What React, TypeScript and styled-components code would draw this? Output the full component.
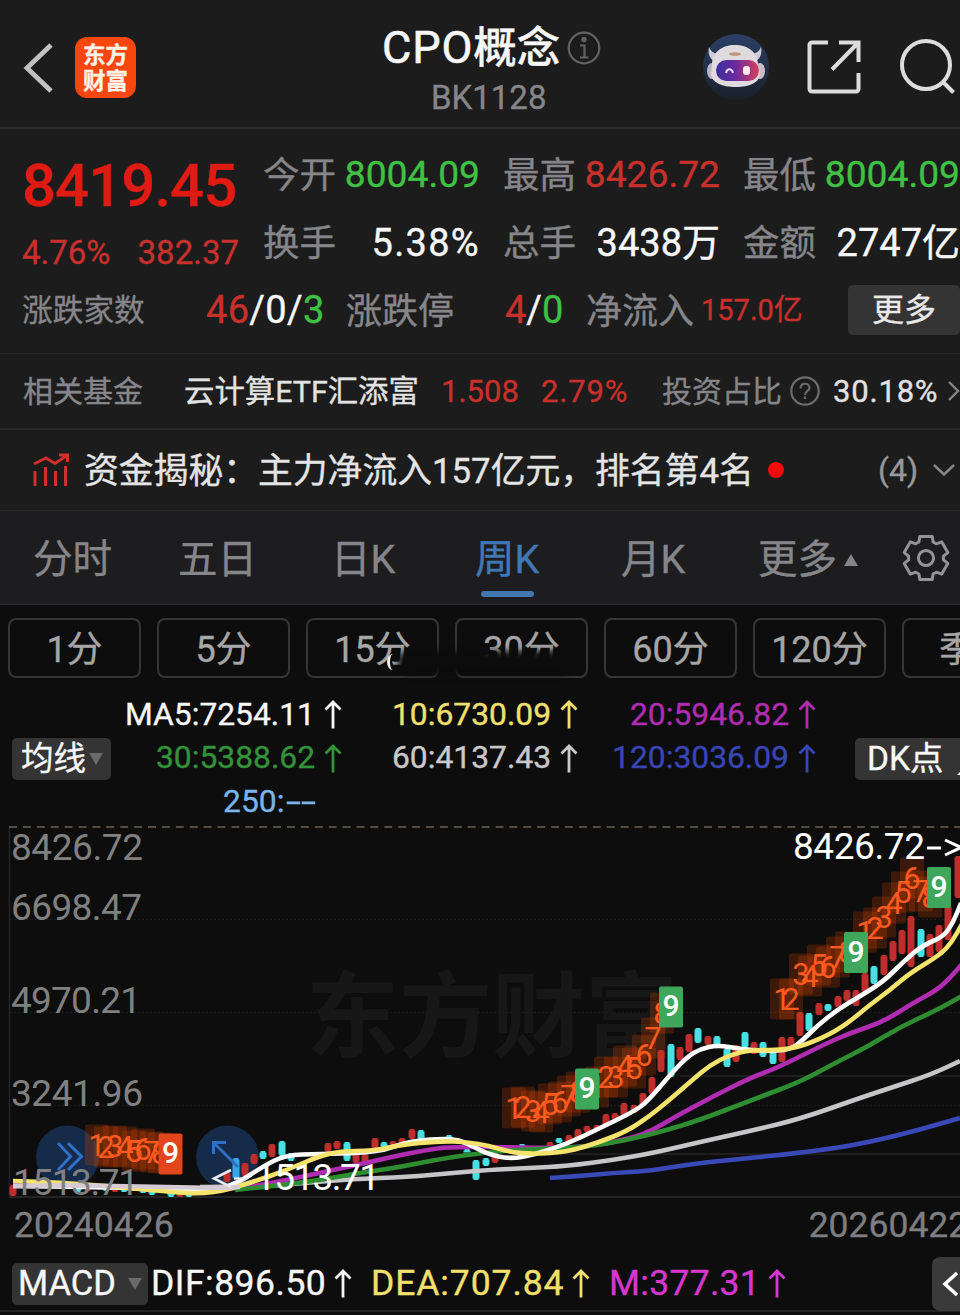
import styled, { createGlobalStyle } from "styled-components";

const RED = "#c8302c";
const GREEN = "#3fc144";
const GREY = "#86868a";
const WHITE = "#f7f7f7";
const YELLOW = "#f2e06e";
const PURPLE = "#b02cb0";
const FONT = `Roboto, "Noto Sans CJK SC", sans-serif`;

const periods = ["1分", "5分", "15分", "30分", "60分", "120分", "季K"];

const averages = [
  { text: "MA5:7254.11", color: WHITE },
  { text: "10:6730.09", color: YELLOW },
  { text: "20:5946.82", color: PURPLE },
  { text: "30:5388.62", color: "#34923a" },
  { text: "60:4137.43", color: "#c9c9c9" },
  { text: "120:3036.09", color: "#3746b4" },
];

// x, top, bottom, u = up (red) / d = down (cyan)
const candles: [number, number, number, string][] = [
  [13, 1185, 1196, "u"], [78, 1186, 1192, "d"], [88, 1184, 1191, "u"], [106, 1185, 1191, "d"],
  [115, 1186, 1192, "u"], [124, 1186, 1192, "d"], [143, 1187, 1193, "d"], [152, 1188, 1195, "d"],
  [171, 1190, 1197, "d"], [180, 1190, 1197, "u"], [189, 1190, 1197, "d"], [227, 1172, 1182, "u"],
  [236, 1158, 1179, "b"], [245, 1163, 1176, "u"], [254, 1154, 1164, "u"], [263, 1151, 1159, "d"],
  [272, 1144, 1157, "u"], [282, 1141, 1156, "d"], [291, 1153, 1161, "d"], [328, 1143, 1152, "u"],
  [337, 1141, 1149, "u"], [347, 1142, 1161, "d"], [356, 1153, 1163, "u"], [365, 1154, 1163, "u"],
  [375, 1138, 1149, "u"], [384, 1142, 1148, "d"], [393, 1141, 1146, "u"], [402, 1138, 1144, "u"],
  [412, 1129, 1139, "u"], [421, 1130, 1140, "d"], [449, 1135, 1140, "d"], [467, 1149, 1152, "d"],
  [476, 1160, 1180, "d"], [486, 1158, 1166, "d"], [495, 1156, 1163, "u"], [522, 1144, 1148, "d"],
  [550, 1142, 1146, "u"], [559, 1138, 1143, "d"], [569, 1135, 1144, "u"], [578, 1129, 1140, "u"],
  [587, 1126, 1132, "u"], [597, 1125, 1131, "u"], [606, 1114, 1126, "u"], [615, 1113, 1120, "u"],
  [624, 1103, 1116, "u"], [634, 1105, 1113, "u"], [643, 1093, 1106, "u"], [652, 1077, 1094, "u"],
  [661, 1050, 1072, "u"], [671, 1044, 1077, "d"], [680, 1047, 1060, "u"], [689, 1034, 1052, "u"],
  [698, 1028, 1043, "d"], [708, 1036, 1045, "u"], [717, 1036, 1048, "d"], [727, 1048, 1067, "d"],
  [736, 1045, 1062, "u"], [745, 1032, 1048, "d"], [754, 1042, 1054, "u"], [763, 1042, 1057, "d"],
  [773, 1050, 1064, "d"], [782, 1037, 1062, "u"], [791, 1037, 1047, "u"], [800, 1012, 1036, "u"],
  [809, 1013, 1031, "d"], [819, 1003, 1015, "u"], [828, 1004, 1011, "d"], [838, 996, 1007, "u"],
  [847, 990, 1001, "u"], [856, 990, 1006, "u"], [865, 973, 993, "u"], [874, 966, 984, "d"],
  [884, 955, 975, "u"], [893, 941, 961, "u"], [902, 930, 954, "u"], [911, 916, 967, "u"],
  [921, 929, 957, "d"], [930, 934, 957, "u"], [939, 925, 952, "u"], [948, 905, 940, "u"],
  [958, 856, 898, "u"],
];

const candleColors: Record<string, string> = { u: "#bd2e2d", d: "#48e0e2", b: "#35a8e8" };

const lines = [
  {
    color: "#3a49b8",
    points: "550,1178 580,1176 613,1173 647,1171 673,1167 700,1163 740,1159 780,1155 830,1149 870,1142 915,1131 960,1118",
  },
  {
    color: "#c6c6c8",
    points: "200,1187 260,1187 303,1183 353,1179 407,1177 453,1173 487,1170 530,1168 567,1166 613,1160 653,1153 700,1142 750,1131 800,1119 857,1099 890,1088 930,1075 960,1061",
  },
  {
    color: PURPLE,
    points: "13,1184 120,1188 210,1190 245,1188 287,1180 333,1170 370,1162 400,1155 433,1149 450,1147 500,1147 543,1148 587,1147 633,1138 653,1130 673,1118 710,1098 750,1078 777,1068 823,1045 850,1033 883,1022 913,1003 937,990 950,978 962,964",
  },
  {
    color: "#2f8d31",
    points: "235,1190 303,1183 353,1174 400,1167 440,1159 487,1152 533,1149 587,1147 627,1140 660,1132 700,1120 757,1098 800,1082 837,1062 867,1047 900,1027 937,1010 962,996",
  },
  {
    color: "#fbfbfb",
    points: "13,1186 110,1187 170,1190 210,1192 238,1183 262,1167 285,1155 320,1154 360,1153 385,1150 410,1141 450,1138 467,1143 487,1154 510,1159 533,1155 567,1144 600,1128 633,1112 647,1102 670,1075 687,1057 700,1049 718,1045 740,1049 765,1051 790,1050 803,1040 817,1026 837,1010 857,998 883,982 903,962 923,945 943,937 953,923 961,903",
  },
  {
    color: "#f4e36c",
    points: "13,1181 60,1182 150,1190 208,1195 253,1182 287,1170 317,1157 340,1151 373,1151 400,1145 440,1141 467,1142 490,1146 510,1152 533,1154 567,1152 600,1142 627,1131 647,1118 667,1102 690,1082 710,1065 730,1055 750,1050 790,1050 823,1038 847,1024 867,1007 890,990 910,973 940,955 952,942 962,924",
  },
  {
    color: "#d6cbd4",
    points: "13,1186 60,1185 110,1186 170,1187 215,1188 240,1187",
  },
];

// centre points of the 1-8 counts, the closing 9 comes last
const counts = [
  { fill: "#e2441b", at: [[97, 1145], [106, 1147], [115, 1146], [125, 1147], [134, 1151], [143, 1149], [152, 1152], [160, 1153], [170.5, 1154]] },
  { fill: "#3fa75b", at: [[514, 1108], [523, 1107], [533, 1111], [541, 1112], [550, 1104], [560, 1102], [569, 1096], [578, 1092], [587, 1089]] },
  { fill: "#3fa75b", at: [[597, 1087], [606, 1077], [616, 1077], [625, 1066], [634, 1068], [644, 1055], [653, 1038], [662, 1013], [671, 1007]] },
  { fill: "#3fa75b", at: [[782, 999], [791, 999], [801, 974], [810, 976], [819, 965], [828, 967], [838, 957], [847, 952], [856, 952.5]] },
  { fill: "#3fa75b", at: [[865, 932], [875, 928], [884, 917], [894, 903], [903, 892], [912, 878], [921, 891], [930, 897], [939, 887.5]] },
];

function smooth(points: string) {
  const p = points.split(" ").map((s) => s.split(",").map(Number));
  let d = `M${p[0][0]} ${p[0][1]}`;
  for (let i = 1; i < p.length - 1; i++) {
    const mx = (p[i][0] + p[i + 1][0]) / 2;
    const my = (p[i][1] + p[i + 1][1]) / 2;
    d += `Q${p[i][0]} ${p[i][1]} ${mx} ${my}`;
  }
  const last = p[p.length - 1];
  return d + `L${last[0]} ${last[1]}`;
}

function gearPath() {
  const out: string[] = [];
  for (let k = 0; k < 6; k++) {
    [[-24, 17.5], [-16, 22.5], [16, 22.5], [24, 17.5]].forEach(([deg, r]) => {
      const a = ((k * 60 + deg - 90) * Math.PI) / 180;
      out.push(`${(24 + r * Math.cos(a)).toFixed(1)} ${(24 + r * Math.sin(a)).toFixed(1)}`);
    });
  }
  return `M${out.join("L")}Z`;
}

const UpArrow = () => (
  <svg width="18" height="29" viewBox="0 0 18 29" fill="none" stroke="currentColor" strokeWidth="2.8">
    <path d="M9 28.5V2M1.5 9.5L9 2L16.5 9.5" />
  </svg>
);

const Robot = () => (
  <svg width="68" height="68" viewBox="0 0 68 68">
    <defs>
      <linearGradient id="sky" x1="0" y1="0" x2="0" y2="1">
        <stop offset="0" stopColor="#2b4067" />
        <stop offset="1" stopColor="#1b2029" />
      </linearGradient>
      <linearGradient id="visor" x1="0" y1="0" x2="1" y2="0">
        <stop offset="0" stopColor="#3a2f9c" />
        <stop offset="0.45" stopColor="#6a2aa0" />
        <stop offset="1" stopColor="#d8405c" />
      </linearGradient>
    </defs>
    <circle cx="34" cy="34" r="33" fill="url(#sky)" />
    <path d="M7 14c-1 6 0 11 5 14l8-7c-6 1-11-2-13-7zM59 14c1 6 0 11-5 14l-8-7c6 1 11-2 13-7z" fill="#cfcad4" />
    <ellipse cx="10" cy="38" rx="5" ry="8" fill="#bcb7c6" />
    <ellipse cx="58" cy="38" rx="5" ry="8" fill="#c6bfca" />
    <path d="M10 32c0-13 10-20 23-20s23 7 23 20l2 8c0 10-11 14-24 14s-25-4-25-14z" fill="#dedade" />
    <ellipse cx="33" cy="21" rx="6" ry="1.8" fill="#bf947e" />
    <rect x="14" y="27" width="43" height="21" rx="10.5" fill="url(#visor)" />
    <path d="M24 40c1-5 6-5 7 0" fill="none" stroke="#e4dcff" strokeWidth="2" />
    <rect x="41" y="33" width="7" height="9" rx="3" fill="#ffe6ee" />
  </svg>
);

function KLineChart() {
  return (
    <ChartSvg viewBox="0 826 960 372" width="960" height="372">
      <text x="306" y="1050" fontSize="93" fontWeight="700" fill="#171717">东方财富</text>
      <g stroke="#1b1b1b" strokeWidth="1.5">
        <path d="M10 919.5H960M10 1012.5H960M10 1105.5H960" strokeDasharray="2 2" />
        <path d="M680 1076H960M560 1154H960" stroke="#252525" />
        <path d="M9.5 827V1197" stroke="#242424" />
        <path d="M9.5 1197H960" stroke="#2e2e2e" />
      </g>
      <path d="M9 827H960" stroke="#6c6155" strokeWidth="1.6" strokeDasharray="8 5.9" />

      <g fill="#162b49">
        <circle cx="67.5" cy="1157" r="31.5" />
        <circle cx="227.5" cy="1157" r="31.5" />
      </g>

      {candles.map(([x, top, bottom, dir]) => (
        <g key={x} fill={candleColors[dir]}>
          <rect x={x - 2.5} y={top} width="5" height={bottom - top} />
          <rect x={x - 3.5} y={top + 1.5} width="7" height={Math.max(bottom - top - 3, 2)} />
        </g>
      ))}
      {lines.map((line) => (
        <path key={line.color} d={smooth(line.points)} fill="none" stroke={line.color} strokeWidth="4.6" />
      ))}

      <g fontSize="37" fill="#808080">
        <text x="11" y="860" textLength="132">8426.72</text>
        <text x="11" y="919.5" textLength="131">6698.47</text>
        <text x="11" y="1012.5" textLength="130">4970.21</text>
        <text x="11" y="1105.5" textLength="132">3241.96</text>
        <text x="13" y="1195" textLength="126">1513.71</text>
      </g>

      {counts.map((group, g) => (
        <g key={g}>
          {group.at.slice(0, 8).map(([x, y]) => (
            <rect key={x} x={x - 12} y={y - 20.5} width="24" height="41" rx="2" fill="#d84400" opacity="0.24" />
          ))}
          {group.at.slice(0, 8).map(([x, y], i) => (
            <text key={x} x={x} y={y + 10.5} fontSize="31" textAnchor="middle" fill="#ff5a1f">
              {i + 1}
            </text>
          ))}
        </g>
      ))}
      {counts.map((group, g) => {
        const [x, y] = group.at[8];
        return (
          <g key={g}>
            <rect x={x - 12} y={y - 20.5} width="24" height="41" rx="2" fill={group.fill} />
            <text x={x} y={y + 9} fontSize="30" fontWeight="500" textAnchor="middle" fill="#fff">9</text>
          </g>
        );
      })}

      <g fill="none" stroke="#2f6fc6" strokeWidth="3">
        <path d="M58 1143L70.500 1156.500L58 1170M68 1143L81.500 1156.500L68 1170" />
        <path d="M213.500 1154V1142.500H226M214 1143L238 1167" />
      </g>
      <path d="M231 1170L214 1178.500L231 1187" fill="none" stroke="#e8e8ee" strokeWidth="2.6" />
      <path d="M234 1178.500H247" stroke="#e8e8ee" strokeWidth="2.4" />
      <g fontSize="37" fill="#fff">
        <text x="255" y="1190" textLength="125">1513.71</text>
        <text x="793" y="859" textLength="132">8426.72</text>
      </g>
      <path d="M927 848H941M945 840L961 847.500L945 855" fill="none" stroke="#fff" strokeWidth="3" />
    </ChartSvg>
  );
}

export default function App() {
  return (
    <Page>
      <GlobalStyle />
      <Header>
        <BackButton>
          <svg width="30" height="50" viewBox="0 0 30 50" fill="none" stroke="#c2c2c2" strokeWidth="4.8">
            <path d="M28 2L4 25L28 48" />
          </svg>
        </BackButton>
        <Logo>
          <span>东方</span>
          <span>财富</span>
        </Logo>
        <TitleBlock>
          <Title>
            <span><Latin>CPO</Latin>概念</span>
            <svg width="34" height="34" viewBox="0 0 34 34" fill="none" stroke="#626264" strokeWidth="2.2">
              <circle cx="17" cy="17" r="15.3" />
              <path d="M13 14.500H17.500V26M13 26.500H21.500" />
              <circle cx="17" cy="8.500" r="1.600" fill="#626264" />
            </svg>
          </Title>
          <Code>BK1128</Code>
        </TitleBlock>
        <HeaderIcons>
          <Robot />
          <svg width="54" height="54" viewBox="0 0 54 54" fill="none" stroke="#dcdcdc" strokeWidth="4">
            <path d="M21 2.500H5a2.500 2.500 0 0 0-2.500 2.500V49a2.500 2.500 0 0 0 2.500 2.500H49a2.500 2.500 0 0 0 2.500-2.500V33" />
            <path d="M32 2.500H51.500V22M50.500 3.500L25 29.500" />
          </svg>
          <svg width="58" height="56" viewBox="0 0 58 56" fill="none" stroke="#dcdcdc" strokeWidth="4">
            <circle cx="27" cy="27" r="24" />
            <path d="M43.500 43.500L54.500 54.500" />
          </svg>
        </HeaderIcons>
      </Header>

      <Quote>
        <PriceBlock>
          <Price>8419.45</Price>
          <Change>
            <span>4.76%</span>
            <span>382.37</span>
          </Change>
        </PriceBlock>
        <Stats>
          <Stat><Label>今开</Label><Value $size={37.2} $color={GREEN}>8004.09</Value></Stat>
          <Stat><Label>最高</Label><Value $size={37.2} $color={RED}>8426.72</Value></Stat>
          <Stat><Label>最低</Label><Value $size={37.2} $color={GREEN}>8004.09</Value></Stat>
          <Stat><Label>换手</Label><Value $spacing={1.3}>5.38%</Value></Stat>
          <Stat><Label>总手</Label><Value>3438万</Value></Stat>
          <Stat><Label>金额</Label><Value>2747亿</Value></Stat>
        </Stats>
      </Quote>
      <Breadth>
        <Label $size={30.7}>涨跌家数</Label>
        <Value $spacing={0.3}><Tint $color={RED}>46</Tint>/0/<Tint $color={GREEN}>3</Tint></Value>
        <Label $size={36}>涨跌停</Label>
        <Value><Tint $color={RED}>4</Tint>/<Tint $color={GREEN}>0</Tint></Value>
        <Label $size={36}>净流入</Label>
        <Value $color={RED} $size={29} $drop={1}>157.0亿</Value>
        <MoreButton>更多</MoreButton>
      </Breadth>

      <FundRow>
        <Label $size={30} $drop={1}>相关基金</Label>
        <Value $size={30.4} $color="#e2e2e2" $drop={1}>云计算ETF汇添富</Value>
        <Value $size={31} $color={RED}>1.508</Value>
        <Value $size={31} $color={RED} $spacing={0.8}>2.79%</Value>
        <Label $size={30} $drop={1}>投资占比</Label>
        <svg width="30" height="30" viewBox="0 0 30 30" fill="none" stroke="#6c6c6e" strokeWidth="2.2">
          <circle cx="15" cy="15" r="13.700" />
          <path d="M10.500 12.500C10.500 6 19.500 6.500 19.500 12C19.500 15 15 15 15 19M15 20.500V23" />
        </svg>
        <Value $size={31} $color="#e2e2e2" $spacing={0.8}>30.18%</Value>
        <svg width="14" height="22" viewBox="0 0 14 22" fill="none" stroke="#86868a" strokeWidth="2.4">
          <path d="M2 2L11 11L2 20" />
        </svg>
      </FundRow>

      <NewsRow>
        <svg width="38" height="34" viewBox="0 0 38 34" fill="none" stroke="#cf2f2d" strokeWidth="3">
          <path d="M2 11L14 5L23 10.500L35 2.500M27 2H35.500V9" />
          <path d="M3 18V33M13.500 14V33M23.500 18V33M33.500 13V33" />
        </svg>
        <NewsText>资金揭秘：主力净流入157亿元，排名第4名</NewsText>
        <Dot />
        <NewsCount>(4)</NewsCount>
        <svg width="24" height="14" viewBox="0 0 24 14" fill="none" stroke="#86868a" strokeWidth="2.6">
          <path d="M2 2L12 11.500L22 2" />
        </svg>
      </NewsRow>

      <Tabs>
        <Tab>分时</Tab>
        <Tab>五日</Tab>
        <Tab>日K</Tab>
        <Tab $active>周K</Tab>
        <Tab>月K</Tab>
        <Tab>
          更多
          <svg width="14" height="12" viewBox="0 0 14 12" fill="#86868a"><path d="M7 0L14 12H0Z" /></svg>
        </Tab>
        <svg width="48" height="48" viewBox="0 0 48 48" fill="none" stroke="#949496" strokeWidth="3" strokeLinejoin="round">
          <path d={gearPath()} />
          <circle cx="24" cy="24" r="7.600" />
        </svg>
      </Tabs>

      <Periods>
        {periods.map((p) => (
          <Period key={p}>{p}</Period>
        ))}
        <Smudge />
        <Glint />
      </Periods>

      <Averages>
        <Pill>
          均线
          <Caret />
        </Pill>
        <AverageGrid>
          {averages.map((a) => (
            <Average key={a.text} $color={a.color}>
              {a.text}
              <UpArrow />
            </Average>
          ))}
          <Average $color="#79b5ea" $noArrow>
            <span>250:<Dashes>--</Dashes></span>
          </Average>
        </AverageGrid>
        <DkPill>
          DK点
          <svg width="14" height="14" viewBox="0 0 14 14" fill="#fff"><path d="M14 0V14H0Z" /></svg>
        </DkPill>
      </Averages>

      <KLineChart />
      <Dates>
        <span>20240426</span>
        <span>20260422</span>
      </Dates>

      <Macd>
        <MacdPill>
          MACD
          <Caret />
        </MacdPill>
        <Legend $color={WHITE} $width={220} $spacing={0.5}>DIF:896.50<UpArrow /></Legend>
        <Legend $color={YELLOW} $width={238} $spacing={0.9}>DEA:707.84<UpArrow /></Legend>
        <Legend $color="#d637cf" $width={180} $spacing={0.3}>M:377.31<UpArrow /></Legend>
        <Collapse>
          <svg width="18" height="28" viewBox="0 0 18 28" fill="none" stroke="#fff" strokeWidth="3.6">
            <path d="M16 3L4 14L16 25" />
          </svg>
        </Collapse>
      </Macd>
    </Page>
  );
}

const GlobalStyle = createGlobalStyle`
  * {
    box-sizing: border-box;
  }
  body {
    margin: 0;
    background: #0d0d0d;
  }
  svg {
    display: block;
    flex: none;
  }
`;

const Page = styled.div`
  width: 960px;
  height: 1315px;
  overflow: hidden;
  background: #0d0d0d;
  color: ${WHITE};
  font-family: ${FONT};
  line-height: 1;
  white-space: nowrap;
  -webkit-text-stroke: 0.35px currentColor;
`;

const Header = styled.header`
  display: grid;
  grid-template-columns: 75px 61px 1fr 258px;
  height: 129px;
  background: #1c1c1c;
  border-bottom: 2px solid #282828;
`;

const BackButton = styled.div`
  padding: 43px 0 0 23px;
`;

const Logo = styled.div`
  display: flex;
  flex-direction: column;
  align-items: center;
  justify-content: center;
  width: 61px;
  height: 61px;
  margin-top: 37px;
  border-radius: 12px;
  background: #f8460f;
  color: #fff3e8;
  font-size: 22.5px;
  font-weight: 700;
  line-height: 26px;
`;

const TitleBlock = styled.div`
  padding: 23px 0 0 246px;
`;

const Title = styled.div`
  display: flex;
  align-items: center;
  gap: 7px;
  height: 50px;
  font-size: 43.5px;
  font-weight: 500;
`;

const Latin = styled.span`
  font-size: 45px;
  font-weight: 400;
  letter-spacing: 0.9px;
  -webkit-text-stroke: 0.6px currentColor;
`;

const Code = styled.div`
  margin: 8px 0 0 49px;
  font-size: 33px;
  color: ${GREY};
`;

const HeaderIcons = styled.div`
  display: flex;
  align-items: flex-start;
  padding-top: 33px;

  svg:nth-child(2) {
    margin: 7px 0 0 37px;
  }

  svg:nth-child(3) {
    margin: 5px 0 0 38px;
  }
`;

const Quote = styled.section`
  display: flex;
  height: 147px;
  padding: 11px 0 0 22px;
  background: #1c1c1c;
`;

const PriceBlock = styled.div`
  width: 241px;
  flex: none;
  color: ${RED};
`;

const Price = styled.div`
  height: 78px;
  padding-top: 16px;
  font-size: 60px;
  font-weight: 500;
  color: #e01b14;
  letter-spacing: -1px;
`;

const Change = styled.div`
  display: flex;
  justify-content: space-between;
  width: 217px;
  padding-top: 18px;
  font-size: 33px;
`;

const Stats = styled.div`
  display: grid;
  grid-template-columns: repeat(3, 217px);
  grid-auto-rows: 68px;
  column-gap: 23px;
`;

const Stat = styled.div`
  display: flex;
  align-items: center;
  justify-content: space-between;
`;

const Label = styled.span<{ $size?: number; $drop?: number }>`
  padding-top: ${(p) => (p.$drop ?? 2) * 2}px;
  font-size: ${(p) => p.$size ?? 36.5}px;
  color: ${GREY};
`;

const Value = styled.span<{ $color?: string; $size?: number; $spacing?: number; $drop?: number }>`
  padding-top: ${(p) => (p.$drop ?? 0.5) * 2}px;
  font-size: ${(p) => p.$size ?? 38}px;
  color: ${(p) => p.$color ?? WHITE};
  letter-spacing: ${(p) => p.$spacing ?? 0}px;
`;

const Tint = styled.span<{ $color: string }>`
  color: ${(p) => p.$color};
`;

const Breadth = styled.section`
  display: grid;
  grid-template-columns: 184px 140px 159px 81px 115px 147px 112px;
  align-items: center;
  height: 78px;
  padding: 0 0 10px 22px;
  background: #1c1c1c;
  border-bottom: 1px solid #262626;
`;

const MoreButton = styled.div`
  height: 50px;
  border-radius: 5px;
  background: #343434;
  color: #e8e8e8;
  font-size: 32px;
  line-height: 50px;
  text-align: center;
`;

const FundRow = styled.section`
  display: grid;
  grid-template-columns: 161px 257px 100px 121px 128px 43px 114px 14px;
  align-items: center;
  height: 76px;
  padding-left: 23px;
  background: #1c1c1c;
  border-bottom: 2px solid #2a2a2a;
`;

const NewsRow = styled.section`
  display: flex;
  align-items: center;
  height: 81px;
  padding-left: 32px;
  background: #1c1c1c;
  border-bottom: 1px solid #282828;
`;

const NewsText = styled.div`
  width: 683px;
  padding: 2px 0 0 14px;
  font-size: 34.8px;
  color: #e4e4e4;
`;

const Dot = styled.i`
  width: 16px;
  height: 16px;
  margin-left: 15px;
  border-radius: 50%;
  background: #f00c0c;
`;

const NewsCount = styled.div`
  width: 54px;
  margin-left: 94px;
  font-size: 32px;
  color: #98989a;
`;

const Tabs = styled.nav`
  display: grid;
  grid-template-columns: 145px 153px 144px 146px 137px 144px 48px;
  align-items: center;
  height: 94px;
  padding-left: 33px;
  background: #1d1d1f;
  border-bottom: 1px solid #2f2f2f;
`;

const Tab = styled.div<{ $active?: boolean }>`
  position: relative;
  display: flex;
  align-items: center;
  gap: 7px;
  padding-top: 5px;
  font-size: 39.5px;
  color: ${(p) => (p.$active ? "#4178b4" : GREY)};

  ${(p) =>
    p.$active &&
    `&::after {
      content: "";
      position: absolute;
      left: 6px;
      bottom: -17px;
      width: 53px;
      height: 6px;
      border-radius: 3px;
      background: #4377b0;
    }`}
`;

const Periods = styled.div`
  position: relative;
  display: flex;
  gap: 16px;
  height: 86px;
  padding: 13px 0 0 8px;
  overflow: hidden;
`;

const Period = styled.div`
  flex: none;
  width: 133px;
  height: 60px;
  border: 2px solid #363636;
  border-radius: 8px;
  font-size: 36px;
  line-height: 60px;
  text-align: center;
  color: #a6a6a6;
`;

const Smudge = styled.i`
  position: absolute;
  left: 398px;
  top: 46px;
  width: 174px;
  height: 23px;
  border-radius: 10px;
  background: #0c0c0c;
  filter: blur(3px);
`;

const Glint = styled.i`
  position: absolute;
  left: 387px;
  top: 49px;
  width: 12px;
  height: 16px;
  border-left: 3px solid #eee;
  border-radius: 50%;
  filter: blur(0.6px);
`;

const Averages = styled.section`
  display: flex;
  height: 135px;
  padding-left: 12px;
`;

const Pill = styled.div`
  display: flex;
  flex: none;
  align-items: center;
  gap: 3px;
  width: 99px;
  height: 42px;
  margin-top: 47px;
  padding-left: 9px;
  border-radius: 5px;
  background: #343434;
  font-size: 32.5px;
`;

const DkPill = styled(Pill)`
  width: 110px;
  margin-left: 39px;
  padding-left: 12px;
  gap: 13px;
  font-size: 33.5px;

  svg {
    margin-top: 18px;
  }
`;

const Caret = styled.i`
  border: 7px solid transparent;
  border-top: 12px solid #6a6a6a;
  border-bottom: 0;
`;

const AverageGrid = styled.div`
  display: grid;
  flex: none;
  grid-template-columns: 231px 236px 238px;
  grid-auto-rows: 43.5px;
  padding-top: 2px;
`;

const Average = styled.div<{ $color: string; $noArrow?: boolean }>`
  display: flex;
  align-items: center;
  justify-content: flex-end;
  gap: 9px;
  padding-right: ${(p) => (p.$noArrow ? 26 : 0)}px;
  font-size: 31.8px;
  color: ${(p) => p.$color};
`;

const Dashes = styled.span`
  display: inline-block;
  margin-left: 2px;
  transform: scaleX(1.7);
  transform-origin: left;
  margin-right: 12px;
`;

const ChartSvg = styled.svg`
  font-family: ${FONT};
`;

const Dates = styled.div`
  display: flex;
  height: 59px;
  padding: 10px 0 0 14px;
  font-size: 35.5px;
  color: #7e7e80;

  span:last-child {
    margin-left: 635px;
  }
`;

const Macd = styled.section`
  display: flex;
  align-items: center;
  height: 55px;
  padding-left: 12px;
  border-bottom: 2px solid #242424;
`;

const MacdPill = styled(Pill)`
  width: 136px;
  margin: 0 1px 0 0;
  padding-left: 6px;
  gap: 12px;
  font-size: 34.5px;
`;

const Legend = styled.div<{ $color: string; $width: number; $spacing?: number }>`
  display: flex;
  align-items: center;
  gap: 8px;
  flex: none;
  width: ${(p) => p.$width}px;
  padding-left: 2px;
  font-size: 35.5px;
  letter-spacing: ${(p) => p.$spacing ?? 0.2}px;
  color: ${(p) => p.$color};
`;

const Collapse = styled.div`
  flex: none;
  width: 40px;
  height: 54px;
  margin-left: 145px;
  padding: 13px 0 0 9px;
  border-radius: 8px;
  background: #3a3a3a;
`;
